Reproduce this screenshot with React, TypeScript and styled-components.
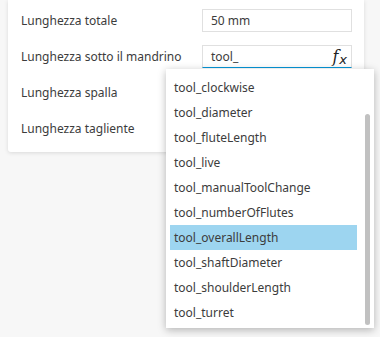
import React from "react";
import styled, { createGlobalStyle } from "styled-components";

const Global = createGlobalStyle`
  html, body { margin: 0; padding: 0; }
  body {
    background: #f7f7f7;
    font-family: "Noto Sans", "Open Sans", sans-serif;
    color: #3c3c3c;
    width: 380px;
    height: 337px;
    overflow: hidden;
  }
`;

const Page = styled.div`
  position: relative;
  width: 380px;
  height: 337px;
`;

const Card = styled.div`
  margin-left: 8px;
  width: 356px;
  box-sizing: border-box;
  padding: 9px 12px 12px 13px;
  background: #fff;
  border-radius: 0 0 3px 3px;
  box-shadow: 0 1px 4px rgba(0, 0, 0, 0.12);
  display: grid;
  grid-template-columns: 1fr 150px;
  row-gap: 13px;
  align-items: center;
`;

const Label = styled.div`
  font-size: 12px;
  line-height: 23px;
  white-space: nowrap;
`;

const Field = styled.div<{ $active?: boolean }>`
  position: relative;
  height: 23px;
  box-sizing: border-box;
  border: 1px solid #e0e0e0;
  border-bottom-color: ${(p) => (p.$active ? "#0696d7" : "#e0e0e0")};
  display: flex;
  align-items: center;
  padding-left: 8px;
  font-size: 12px;
  background: #fff;
`;

const Empty = styled.div`
  height: 23px;
`;

const Fx = styled.span`
  margin-left: auto;
  margin-right: 4px;
  font-family: "DejaVu Serif", serif;
  font-style: italic;
  font-size: 16px;
  color: #222;
  display: flex;
  align-items: baseline;
  line-height: 1;
  & > i {
    font-family: "DejaVu Sans", sans-serif;
    font-size: 13px;
    font-style: italic;
    margin-left: 1px;
    position: relative;
    top: 2px;
  }
`;

const Dropdown = styled.div`
  position: absolute;
  left: 166px;
  top: 69px;
  width: 208px;
  height: 259px;
  box-sizing: border-box;
  padding: 6px 17px 3px 4px;
  background: #fff;
  box-shadow: 0 2px 8px rgba(0, 0, 0, 0.28);
`;

const Item = styled.div<{ $selected?: boolean }>`
  height: 25px;
  line-height: 25px;
  padding-left: 4px;
  font-size: 12px;
  white-space: nowrap;
  background: ${(p) => (p.$selected ? "#9dd5f0" : "transparent")};
`;

const Scrollbar = styled.div`
  position: absolute;
  right: 4px;
  top: 45px;
  width: 5px;
  height: 211px;
  border-radius: 3px;
  background: #c1c1c1;
`;

const items = [
  "tool_clockwise",
  "tool_diameter",
  "tool_fluteLength",
  "tool_live",
  "tool_manualToolChange",
  "tool_numberOfFlutes",
  "tool_overallLength",
  "tool_shaftDiameter",
  "tool_shoulderLength",
  "tool_turret",
];

export default function App() {
  return (
    <Page>
      <Global />
      <Card>
        <Label>Lunghezza totale</Label>
        <Field>50 mm</Field>
        <Label>Lunghezza sotto il mandrino</Label>
        <Field $active>
          tool_
          <Fx>
            f<i>x</i>
          </Fx>
        </Field>
        <Label>Lunghezza spalla</Label>
        <Empty />
        <Label>Lunghezza tagliente</Label>
        <Empty />
      </Card>
      <Dropdown>
        {items.map((t) => (
          <Item key={t} $selected={t === "tool_overallLength"}>
            {t}
          </Item>
        ))}
        <Scrollbar />
      </Dropdown>
    </Page>
  );
}
